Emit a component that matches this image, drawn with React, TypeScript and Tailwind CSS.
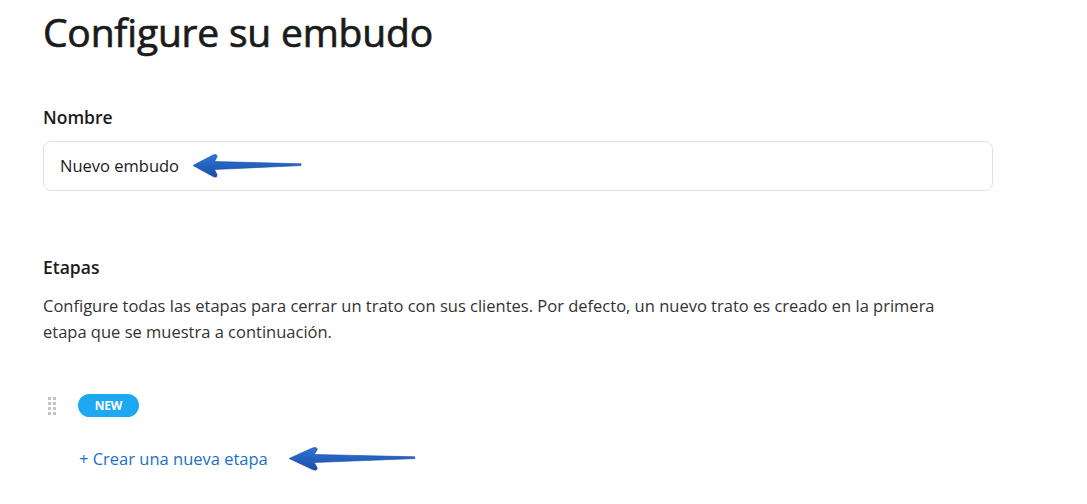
import React from 'react';

function Arrow({ className }: { className?: string }) {
  return (
    <svg className={className} viewBox="0 0 110 26" preserveAspectRatio="none" fill="none">
      <defs>
        <linearGradient id="arrowFill" x1="0" y1="0" x2="0" y2="1">
          <stop offset="0" stopColor="#2f74d6" />
          <stop offset="1" stopColor="#1a4fa6" />
        </linearGradient>
      </defs>
      <path
        d="M1 12.5 L21 2 Q25.5 0.2 25 4 L22.5 8.5 L109 10.8 L109 12.6 L22.5 16.5 L25 21.5 Q25.5 25.5 21 23.5 Z"
        fill="url(#arrowFill)"
        stroke="#1a4fa6"
        strokeWidth="0.6"
        strokeLinejoin="round"
      />
    </svg>
  );
}

function DragHandle() {
  return (
    <div className="grid grid-cols-2 gap-x-[2px] gap-y-[2px]">
      {Array.from({ length: 8 }).map((_, i) => (
        <span key={i} className="w-[3px] h-[3px] bg-[#c4c4c4]" />
      ))}
    </div>
  );
}

export default function App() {
  return (
    <div
      className="min-h-screen bg-white text-[#1f1f1f] pl-[43px] pt-[8px]"
      style={{ fontFamily: '"Open Sans", "Noto Sans", sans-serif' }}
    >
      <h1 className="text-[39px] leading-[48px] font-normal tracking-[-0.2px] text-[#1b1b1b] [-webkit-text-stroke:0.7px_#1b1b1b]">
        Configure su embudo
      </h1>

      <div className="mt-[50px]">
        <label className="block text-[17.5px] leading-[22px] font-semibold text-[#1b1b1b]">Nombre</label>
        <div className="relative mt-[13px] w-[950px] h-[50px] border border-[#e1e1e1] rounded-[8px] flex items-center px-[16px]">
          <span className="text-[16.5px] text-[#1b1b1b]">Nuevo embudo</span>
          <Arrow className="absolute left-[148px] top-[11px] w-[110px] h-[26px]" />
        </div>
      </div>

      <div className="mt-[65px]">
        <h2 className="text-[17.5px] leading-[22px] font-semibold text-[#1b1b1b]">Etapas</h2>
        <p className="mt-[15px] text-[16.5px] leading-[26px] text-[#333333]">
          Configure todas las etapas para cerrar un trato con sus clientes. Por defecto, un nuevo trato es creado en la primera
          <br />
          etapa que se muestra a continuación.
        </p>

        <div className="mt-[49px] flex items-center gap-[22px] pl-[5px]">
          <DragHandle />
          <span className="h-[23px] w-[61px] rounded-full bg-[#1ea8f2] text-white text-[12px] font-bold flex items-center justify-center tracking-[-0.2px]">
            NEW
          </span>
        </div>

        <div className="relative mt-[30px] pl-[36px] flex items-center">
          <button className="text-[16.5px] text-[#1b6fc9]">+ Crear una nueva etapa</button>
          <Arrow className="absolute left-[245px] top-[-1px] w-[128px] h-[26px]" />
        </div>
      </div>
    </div>
  );
}
